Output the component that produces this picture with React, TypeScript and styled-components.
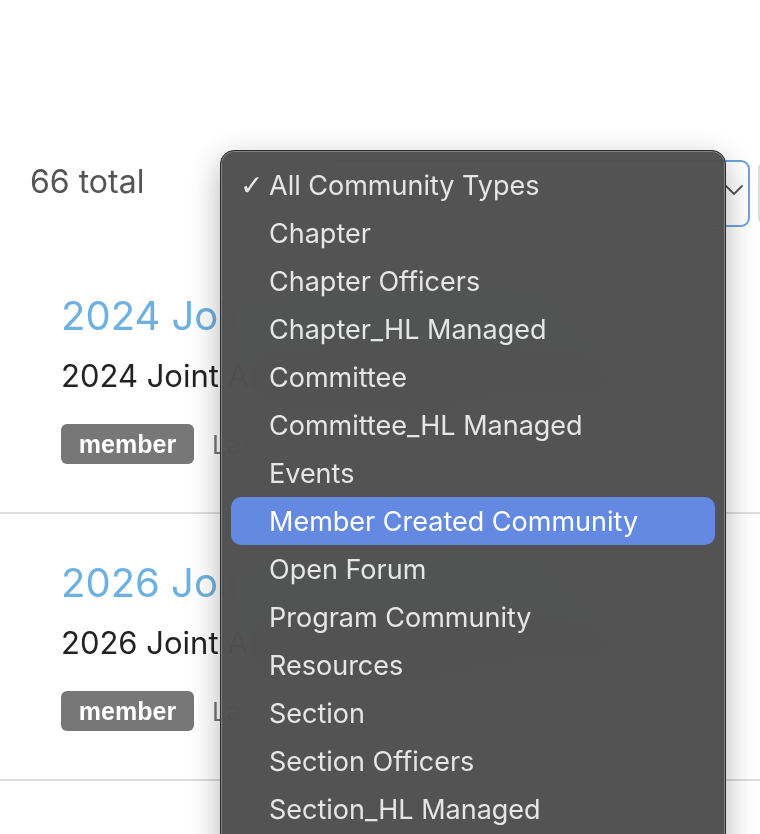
import React from "react";
import styled, { createGlobalStyle } from "styled-components";

const GlobalStyle = createGlobalStyle`
  html, body { margin: 0; padding: 0; background: #fff; overflow: hidden; }
  body { font-family: Inter, "Noto Sans", "Liberation Sans", sans-serif; }
`;

const Page = styled.div`
  position: relative;
  width: 760px;
  height: 834px;
  overflow: hidden;
  padding-top: 160px;
  box-sizing: border-box;
`;

const Toolbar = styled.div`
  display: flex;
  align-items: flex-start;
  justify-content: space-between;
  padding-left: 30px;
  height: 67px;
`;

const Total = styled.div`
  font-size: 32px;
  line-height: 44px;
  color: #555;
`;

const Controls = styled.div`
  display: flex;
  gap: 8px;
  margin-right: -48px;
`;

const SelectBox = styled.div`
  width: 420px;
  height: 67px;
  box-sizing: border-box;
  border: 2px solid #6ea2e2;
  border-radius: 9px;
  display: flex;
  align-items: flex-start;
  justify-content: flex-end;
  padding: 22px 4px 0 0;
`;

const SideButton = styled.div`
  width: 50px;
  height: 62px;
  margin-top: 2px;
  box-sizing: border-box;
  border: 2px solid #ddd;
  border-radius: 6px;
`;

const List = styled.div`
  margin-top: 20px;
`;

const Card = styled.div`
  padding: 43px 0 48px 61px;
  border-bottom: 2px solid #ddd;
  white-space: nowrap;
`;

const Title = styled.div`
  font-size: 40px;
  line-height: 52px;
  color: #6eb0e0;
`;

const Subtitle = styled.div`
  margin-top: 14px;
  font-size: 31px;
  line-height: 40px;
  color: #222;
`;

const Meta = styled.div`
  margin-top: 28px;
  display: flex;
  align-items: center;
  gap: 18px;
`;

const Badge = styled.span`
  display: inline-flex;
  align-items: center;
  justify-content: center;
  width: 133px;
  height: 40px;
  border-radius: 6px;
  background: #777;
  color: #fff;
  font-weight: 700;
  font-size: 25px;
  font-family: "Liberation Sans", Arial, sans-serif;
`;

const MetaText = styled.span`
  font-size: 26px;
  color: #777;
`;

const Menu = styled.div`
  position: absolute;
  left: 220px;
  top: 150px;
  width: 506px;
  box-sizing: border-box;
  padding: 10px 10px 20px;
  background: rgba(72, 72, 72, 0.94);
  backdrop-filter: blur(30px) saturate(1.6);
  -webkit-backdrop-filter: blur(30px) saturate(1.6);
  border-radius: 14px;
  border: 1px solid #2a2a2a;
  box-shadow: inset 0 0 0 1px rgba(255, 255, 255, 0.28), 0 10px 30px rgba(0, 0, 0, 0.3);
`;

const Item = styled.div<{ $active?: boolean }>`
  position: relative;
  height: 48px;
  display: flex;
  align-items: center;
  padding-left: 38px;
  border-radius: 10px;
  font-size: 27px;
  color: ${(p) => (p.$active ? "#fff" : "#e6e6e6")};
  background: ${(p) => (p.$active ? "#6389e2" : "transparent")};
  white-space: nowrap;
`;

const Check = styled.span`
  position: absolute;
  left: 9px;
  font-size: 28px;
  font-family: "DejaVu Sans", sans-serif;
`;

const Chevron = () => (
  <svg width="20" height="12" viewBox="0 0 20 12" fill="none">
    <path d="M2 2 L10 10 L18 2" stroke="#555" strokeWidth="1.8" strokeLinecap="round" strokeLinejoin="round" />
  </svg>
);

const items = [
  "All Community Types",
  "Chapter",
  "Chapter Officers",
  "Chapter_HL Managed",
  "Committee",
  "Committee_HL Managed",
  "Events",
  "Member Created Community",
  "Open Forum",
  "Program Community",
  "Resources",
  "Section",
  "Section Officers",
  "Section_HL Managed",
  "Special Interest Group",
];

const cards = [
  { title: "2024 Joint Annual Meeting", sub: "2024 Joint Annual Meeting Community" },
  { title: "2026 Joint Annual Meeting", sub: "2026 Joint Annual Meeting Community" },
  { title: "Advocacy Network", sub: "Advocacy Network Community" },
];

export default function App() {
  return (
    <>
      <GlobalStyle />
      <Page>
        <Toolbar>
          <Total>66 total</Total>
          <Controls>
            <SelectBox>
              <Chevron />
            </SelectBox>
            <SideButton />
          </Controls>
        </Toolbar>
        <List>
          {cards.map((c) => (
            <Card key={c.title}>
              <Title>{c.title}</Title>
              <Subtitle>{c.sub}</Subtitle>
              <Meta>
                <Badge>member</Badge>
                <MetaText>Last active 2 days ago</MetaText>
              </Meta>
            </Card>
          ))}
        </List>
        <Menu>
          {items.map((it, i) => (
            <Item key={it} $active={it === "Member Created Community"}>
              {i === 0 && <Check>✓</Check>}
              {it}
            </Item>
          ))}
        </Menu>
      </Page>
    </>
  );
}
